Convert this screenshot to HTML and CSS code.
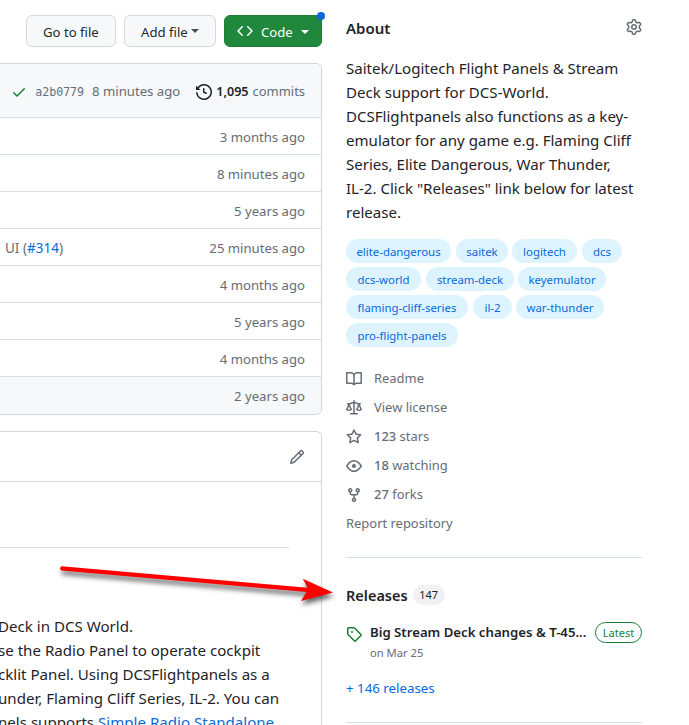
FILE: index.html
```html
<!DOCTYPE html>
<html lang="en">
<head>
<meta charset="utf-8">
<title>Repository</title>
<link rel="stylesheet" href="styles.css">
</head>
<body>
<div class="page">
  <main class="main">
    <div class="toolbar">
      <button class="btn btn-goto">Go to file</button>
      <button class="btn btn-add">Add file<span class="caret"></span></button>
      <button class="btn btn-primary">
        <svg class="icon" viewBox="0 0 16 16"><path d="m11.28 3.22 4.25 4.25a.75.75 0 0 1 0 1.06l-4.25 4.25a.749.749 0 0 1-1.275-.326.749.749 0 0 1 .215-.734L13.94 8l-3.72-3.72a.749.749 0 0 1 .326-1.275.749.749 0 0 1 .734.215Zm-6.56 0a.751.751 0 0 1 1.042.018.751.751 0 0 1 .018 1.042L2.06 8l3.72 3.72a.749.749 0 0 1-.326 1.275.749.749 0 0 1-.734-.215L.47 8.53a.75.75 0 0 1 0-1.06Z"/></svg>
        <span class="code-label">Code</span><span class="caret"></span>
        <span class="dot"></span>
      </button>
    </div>

    <section class="files">
      <div class="files-head">
        <svg class="icon check" viewBox="0 0 16 16"><path d="M13.78 4.22a.75.75 0 0 1 0 1.06l-7.25 7.25a.75.75 0 0 1-1.06 0L2.22 9.28a.751.751 0 0 1 .018-1.042.751.751 0 0 1 1.042-.018L6 10.94l6.72-6.72a.75.75 0 0 1 1.06 0Z"/></svg>
        <code class="sha">a2b0779</code>
        <span class="head-age">8 minutes ago</span>
        <svg class="icon history" viewBox="0 0 16 16"><path d="m.427 1.927 1.215 1.215a8.002 8.002 0 1 1-1.6 5.685.75.75 0 1 1 1.493-.154 6.5 6.5 0 1 0 1.18-4.458l1.358 1.358A.25.25 0 0 1 3.896 6H.25A.25.25 0 0 1 0 5.75V2.104a.25.25 0 0 1 .427-.177ZM7.75 4a.75.75 0 0 1 .75.75v2.992l2.028.812a.75.75 0 0 1-.557 1.392l-2.5-1A.751.751 0 0 1 7 8.25v-3.5A.75.75 0 0 1 7.75 4Z"/></svg>
        <strong class="count">1,095</strong>
        <span class="commits">commits</span>
      </div>
      <div class="row"><span class="age">3 months ago</span></div>
      <div class="row"><span class="age">8 minutes ago</span></div>
      <div class="row"><span class="age">5 years ago</span></div>
      <div class="row"><span class="message">UI (<a href="#">#314</a>)</span><span class="age">25 minutes ago</span></div>
      <div class="row"><span class="age">4 months ago</span></div>
      <div class="row"><span class="age">5 years ago</span></div>
      <div class="row"><span class="age">4 months ago</span></div>
      <div class="row row-last"><span class="age">2 years ago</span></div>
    </section>

    <section class="readme">
      <div class="readme-head">
        <svg class="icon" viewBox="0 0 16 16"><path d="M11.013 1.427a1.75 1.75 0 0 1 2.474 0l1.086 1.086a1.75 1.75 0 0 1 0 2.474l-8.61 8.61c-.21.21-.47.364-.756.445l-3.251.93a.75.75 0 0 1-.927-.928l.929-3.25c.081-.286.235-.547.445-.758l8.61-8.61Zm.176 4.823L9.75 4.81l-6.286 6.287a.253.253 0 0 0-.064.108l-.558 1.953 1.953-.558a.253.253 0 0 0 .108-.064Zm1.238-3.763a.25.25 0 0 0-.354 0L10.811 3.75l1.439 1.44 1.263-1.263a.25.25 0 0 0 0-.354Z"/></svg>
      </div>
      <div class="readme-rule"></div>
      <p class="readme-text">Deck in DCS World.<br>se the Radio Panel to operate cockpit<br>cklit Panel. Using DCSFlightpanels as a<br>under, Flaming Cliff Series, IL-2. You can<br>nels supports <a href="#">Simple Radio Standalone</a></p>
    </section>
  </main>

  <aside class="side">
    <div class="side-head">
      <h2>About</h2>
      <svg class="icon" viewBox="0 0 16 16"><path d="M8 0a8.2 8.2 0 0 1 .701.031C9.444.095 9.99.645 10.16 1.29l.288 1.107c.018.066.079.158.212.224.231.114.454.243.668.386.123.082.233.09.299.071l1.103-.303c.644-.176 1.392.021 1.82.63.27.385.506.792.704 1.218.315.675.111 1.422-.364 1.891l-.814.806c-.049.048-.098.147-.088.294.016.257.016.515 0 .772-.01.147.038.246.088.294l.814.806c.475.469.679 1.216.364 1.891a7.977 7.977 0 0 1-.704 1.217c-.428.61-1.176.807-1.82.63l-1.102-.302c-.067-.019-.177-.011-.3.071a5.909 5.909 0 0 1-.668.386c-.133.066-.194.158-.211.224l-.29 1.106c-.168.646-.715 1.196-1.458 1.26a8.006 8.006 0 0 1-1.402 0c-.743-.064-1.289-.614-1.458-1.26l-.289-1.106c-.018-.066-.079-.158-.212-.224a5.738 5.738 0 0 1-.668-.386c-.123-.082-.233-.09-.299-.071l-1.103.303c-.644.176-1.392-.021-1.82-.63a8.12 8.12 0 0 1-.704-1.218c-.315-.675-.111-1.422.363-1.891l.815-.806c.05-.048.098-.147.088-.294a6.214 6.214 0 0 1 0-.772c.01-.147-.038-.246-.088-.294l-.815-.806C.635 6.045.431 5.298.746 4.623a7.92 7.92 0 0 1 .704-1.217c.428-.61 1.176-.807 1.82-.63l1.102.302c.067.019.177.011.3-.071.214-.143.437-.272.668-.386.133-.066.194-.158.211-.224l.29-1.106C6.009.645 6.556.095 7.299.03 7.53.01 7.764 0 8 0Zm-.571 1.525c-.036.003-.108.036-.137.146l-.289 1.105c-.147.561-.549.967-.998 1.189-.173.086-.34.183-.5.29-.417.278-.97.423-1.529.27l-1.103-.303c-.109-.03-.175.016-.195.045-.22.312-.412.644-.573.99-.014.031-.021.11.059.19l.815.806c.411.406.562.957.53 1.456a4.709 4.709 0 0 0 0 .582c.032.499-.119 1.05-.53 1.456l-.815.806c-.081.08-.073.159-.059.19.162.346.353.677.573.989.02.03.085.076.195.046l1.102-.303c.56-.153 1.113-.008 1.53.27.161.107.328.204.501.29.447.222.85.629.997 1.189l.289 1.105c.029.109.101.143.137.146a6.6 6.6 0 0 0 1.142 0c.036-.003.108-.036.137-.146l.289-1.105c.147-.561.549-.967.998-1.189.173-.086.34-.183.5-.29.417-.278.97-.423 1.529-.27l1.103.303c.109.029.175-.016.195-.045.22-.313.411-.644.573-.99.014-.031.021-.11-.059-.19l-.815-.806c-.411-.406-.562-.957-.53-1.456a4.709 4.709 0 0 0 0-.582c-.032-.499.119-1.05.53-1.456l.815-.806c.081-.08.073-.159.059-.19a6.464 6.464 0 0 0-.573-.989c-.02-.03-.085-.076-.195-.046l-1.102.303c-.56.153-1.113.008-1.53-.27a4.44 4.44 0 0 0-.501-.29c-.447-.222-.85-.629-.997-1.189l-.289-1.105c-.029-.11-.101-.143-.137-.146a6.6 6.6 0 0 0-1.142 0ZM11 8a3 3 0 1 1-6 0 3 3 0 0 1 6 0ZM9.5 8a1.5 1.5 0 1 0-3.001.001A1.5 1.5 0 0 0 9.5 8Z"/></svg>
    </div>
    <p class="about">Saitek/Logitech Flight Panels &amp; Stream<br>Deck support for DCS-World.<br>DCSFlightpanels also functions as a key-<br>emulator for any game e.g. Flaming Cliff<br>Series, Elite Dangerous, War Thunder,<br>IL-2. Click "Releases" link below for latest<br>release.</p>
    <div class="topics">
      <div class="topic-row"><a class="w105">elite-dangerous</a><a class="w52">saitek</a><a class="w65 near">logitech</a><a class="w40">dcs</a></div>
      <div class="topic-row"><a class="w75">dcs-world</a><a class="w88">stream-deck</a><a class="w88 near">keyemulator</a></div>
      <div class="topic-row"><a class="w122">flaming-cliff-series</a><a class="w39">il-2</a><a class="w88 near">war-thunder</a></div>
      <div class="topic-row"><a class="w112">pro-flight-panels</a></div>
    </div>
    <ul class="meta">
      <li><svg class="icon" viewBox="0 0 16 16"><path d="M0 1.75A.75.75 0 0 1 .75 1h4.253c1.227 0 2.317.59 3 1.501A3.743 3.743 0 0 1 11.006 1h4.245a.75.75 0 0 1 .75.75v10.5a.75.75 0 0 1-.75.75h-4.507a2.25 2.25 0 0 0-1.591.659l-.622.621a.75.75 0 0 1-1.06 0l-.622-.621A2.25 2.25 0 0 0 5.258 13H.75a.75.75 0 0 1-.75-.75Zm7.251 10.324.004-5.073-.002-2.253A2.25 2.25 0 0 0 5.003 2.5H1.5v9h3.757a3.75 3.75 0 0 1 1.994.574ZM8.755 4.75l-.004 7.322a3.752 3.752 0 0 1 1.992-.572H14.5v-9h-3.495a2.25 2.25 0 0 0-2.25 2.25Z"/></svg>Readme</li>
      <li><svg class="icon" viewBox="0 0 16 16"><path d="M8.75.75V2h.985c.304 0 .603.08.867.231l1.29.736c.038.022.08.033.124.033h2.234a.75.75 0 0 1 0 1.5h-.427l2.111 4.692a.75.75 0 0 1-.154.838l-.53-.53.529.531-.001.002-.002.002-.006.006-.006.005-.01.01-.045.04c-.21.176-.441.327-.686.45C14.556 10.78 13.88 11 13 11a4.498 4.498 0 0 1-2.023-.454 3.544 3.544 0 0 1-.686-.45l-.045-.04-.016-.015-.006-.006-.004-.004v-.001a.75.75 0 0 1-.154-.838L12.178 4.5h-.162c-.305 0-.604-.079-.868-.231l-1.29-.736a.245.245 0 0 0-.124-.033H8.75V13h2.5a.75.75 0 0 1 0 1.5h-6.5a.75.75 0 0 1 0-1.5h2.5V3.5h-.984a.245.245 0 0 0-.124.033l-1.289.737c-.265.15-.564.23-.869.23h-.162l2.112 4.692a.75.75 0 0 1-.154.838l-.53-.53.529.531-.001.002-.002.002-.006.006-.016.015-.045.04c-.21.176-.441.327-.686.45C4.556 10.78 3.88 11 3 11a4.498 4.498 0 0 1-2.023-.454 3.544 3.544 0 0 1-.686-.45l-.045-.04-.016-.015-.006-.006-.004-.004v-.001a.75.75 0 0 1-.154-.838L2.178 4.5H1.75a.75.75 0 0 1 0-1.5h2.234a.249.249 0 0 0 .125-.033l1.288-.737c.265-.15.564-.23.869-.23h.984V.75a.75.75 0 0 1 1.5 0Zm2.945 8.477c.285.135.718.273 1.305.273s1.02-.138 1.305-.273L13 6.327Zm-10 0c.285.135.718.273 1.305.273s1.02-.138 1.305-.273L3 6.327Z"/></svg>View license</li>
      <li><svg class="icon" viewBox="0 0 16 16"><path d="M8 .25a.75.75 0 0 1 .673.418l1.882 3.815 4.21.612a.75.75 0 0 1 .416 1.279l-3.046 2.97.719 4.192a.751.751 0 0 1-1.088.791L8 12.347l-3.766 1.98a.75.75 0 0 1-1.088-.79l.72-4.194L.818 6.374a.75.75 0 0 1 .416-1.28l4.21-.611L7.327.668A.75.75 0 0 1 8 .25Zm0 2.445L6.615 5.5a.75.75 0 0 1-.564.41l-3.097.45 2.24 2.184a.75.75 0 0 1 .216.664l-.528 3.084 2.769-1.456a.75.75 0 0 1 .698 0l2.77 1.456-.53-3.084a.75.75 0 0 1 .216-.664l2.24-2.183-3.096-.45a.75.75 0 0 1-.564-.41L8 2.694Z"/></svg><b>123</b> stars</li>
      <li><svg class="icon" viewBox="0 0 16 16"><path d="M8 2c1.981 0 3.671.992 4.933 2.078 1.27 1.091 2.187 2.345 2.637 3.023a1.62 1.62 0 0 1 0 1.798c-.45.678-1.367 1.932-2.637 3.023C11.67 13.008 9.981 14 8 14c-1.981 0-3.671-.992-4.933-2.078C1.797 10.83.88 9.576.43 8.898a1.62 1.62 0 0 1 0-1.798c.45-.677 1.367-1.931 2.637-3.022C4.33 2.992 6.019 2 8 2ZM1.679 7.932a.12.12 0 0 0 0 .136c.411.622 1.241 1.75 2.366 2.717C5.176 11.758 6.527 12.5 8 12.5c1.473 0 2.825-.742 3.955-1.715 1.124-.967 1.954-2.096 2.366-2.717a.12.12 0 0 0 0-.136c-.412-.621-1.242-1.75-2.366-2.717C10.824 4.242 9.473 3.5 8 3.5c-1.473 0-2.825.742-3.955 1.715-1.124.967-1.954 2.096-2.366 2.717ZM8 10a2 2 0 1 1-.001-3.999A2 2 0 0 1 8 10Z"/></svg><b>18</b> watching</li>
      <li><svg class="icon" viewBox="0 0 16 16"><path d="M5 5.372v.878c0 .414.336.75.75.75h4.5a.75.75 0 0 0 .75-.75v-.878a2.25 2.25 0 1 1 1.5 0v.878a2.25 2.25 0 0 1-2.25 2.25h-1.5v2.128a2.251 2.251 0 1 1-1.5 0V8.5h-1.5A2.25 2.25 0 0 1 3.5 6.25v-.878a2.25 2.25 0 1 1 1.5 0ZM5 3.25a.75.75 0 1 0-1.5 0 .75.75 0 0 0 1.5 0Zm6.75.75a.75.75 0 1 0 0-1.5.75.75 0 0 0 0 1.5Zm-3 8.75a.75.75 0 1 0-1.5 0 .75.75 0 0 0 1.5 0Z"/></svg><b>27</b> forks</li>
      <li>Report repository</li>
    </ul>

    <section class="releases">
      <div class="releases-head"><h2>Releases</h2><span class="counter">147</span></div>
      <div class="release">
        <svg class="icon tag" viewBox="0 0 16 16"><path d="M1 7.775V2.75C1 1.784 1.784 1 2.75 1h5.025c.464 0 .91.184 1.238.513l6.25 6.25a1.75 1.75 0 0 1 0 2.474l-5.026 5.026a1.75 1.75 0 0 1-2.474 0l-6.25-6.25A1.752 1.752 0 0 1 1 7.775Zm1.5 0c0 .066.026.13.073.177l6.25 6.25a.25.25 0 0 0 .354 0l5.025-5.025a.25.25 0 0 0 0-.354l-6.25-6.25a.25.25 0 0 0-.177-.073H2.75a.25.25 0 0 0-.25.25ZM6 5a1 1 0 1 1 0 2 1 1 0 0 1 0-2Z"/></svg>
        <div class="release-body">
          <div class="release-title"><strong>Big Stream Deck changes &amp; T-45...</strong><span class="latest">Latest</span></div>
          <div class="release-date">on Mar 25</div>
        </div>
      </div>
      <a class="more" href="#">+ 146 releases</a>
    </section>
    <div class="end-rule"></div>
  </aside>

  <svg class="arrow" viewBox="0 0 290 60">
    <path d="M11.500 14.300Q9 15.800 11 18.400L256.500 40 251 49 283 40.400 252.800 26.800 257.500 35.800Z"/>
  </svg>
</div>
</body>
</html>
```
FILE: styles.css
```css
* { box-sizing: border-box; }

body {
  margin: 0;
  background: #fff;
  color: #1f2328;
  font-family: "Noto Sans", "Open Sans", sans-serif;
  font-size: 13.15px;
  line-height: 21px;
}

a { color: #0969da; text-decoration: none; }
h2, p, ul { margin: 0; padding: 0; }
h2 { font-size: 15px; font-weight: 600; line-height: 24px; }

.page {
  position: relative;
  display: flex;
  gap: 24px;
  width: 689px;
  height: 725px;
  overflow: hidden;
}

.icon {
  display: block;
  flex: none;
  width: 16px;
  height: 16px;
  fill: currentColor;
}

.main {
  display: flex;
  flex-direction: column;
  width: 322px;
  flex: none;
  white-space: nowrap;
}

/* Toolbar */
.toolbar {
  display: flex;
  justify-content: flex-end;
  gap: 8px;
  padding-top: 15px;
}

.btn {
  position: relative;
  display: flex;
  align-items: center;
  height: 32px;
  padding: 2px 16px 0;
  border: 1px solid #d5d8da;
  border-radius: 6px;
  background: #f6f8fa;
  color: #24292f;
  font: inherit;
}
.btn-goto { width: 90px; }
.btn-add { width: 92px; }
.btn-primary {
  width: 98px;
  padding: 0 12px;
  border-color: #1f7f37;
  background: #1f883d;
  color: #fff;
}
.code-label { margin-left: 8px; padding-top: 2px; }
.caret {
  margin-left: 3px;
  margin-top: -3px;
  border: 4px solid transparent;
  border-top-color: #484d53;
  border-bottom: 0;
}
.btn-primary .caret { margin: 1px 0 0 8px; border-top-color: #fff; }
.btn-primary .icon { margin-top: -1px; }
.dot {
  position: absolute;
  top: -4px;
  right: -4px;
  width: 8px;
  height: 8px;
  border-radius: 50%;
  background: #0969da;
}

/* File list */
.files {
  flex: none;
  margin-top: 16px;
  border: 1px solid #d0d7de;
  border-left: 0;
  border-radius: 0 6px 6px 0;
  overflow: hidden;
  color: #656d76;
}
.files-head {
  display: flex;
  align-items: center;
  justify-content: flex-end;
  height: 53px;
  padding: 2px 16px 0 0;
  background: #f6f8fa;
}
.check { margin-right: 8px; color: #1a7f37; }
.sha {
  margin-right: 8px;
  font: 11.6px "DejaVu Sans Mono", monospace;
}
.head-age { margin-right: 16px; }
.history { color: #1f2328; }
.count {
  margin-left: 4px;
  margin-right: 4px;
  color: #1f2328;
  font-weight: 600;
  font-size: 12.6px;
}
.commits { font-size: 12.95px; }
.row {
  display: flex;
  align-items: center;
  height: 37px;
  padding: 2px 16px 0 5px;
  border-top: 1px solid #d8dee4;
}
.row-last { height: 38px; background: #f6f8fa; }
.message { font-size: 13.5px; }
.age { margin-left: auto; }

/* Readme */
.readme {
  flex: none;
  height: 294px;
  margin-top: 16px;
  border: 1px solid #d0d7de;
  border-left: 0;
  border-bottom: 0;
  border-radius: 0 6px 0 0;
}
.readme-head {
  display: flex;
  align-items: center;
  justify-content: flex-end;
  height: 50px;
  padding-right: 16px;
  border-bottom: 1px solid #d0d7de;
  color: #656d76;
}
.readme-rule {
  height: 66px;
  margin-right: 32px;
  border-bottom: 1px solid #d8dee4;
}
.readme-text {
  margin: 66px 0 0 -2px;
  font-size: 15.1px;
  line-height: 24px;
}

/* Sidebar */
.side { width: 296px; flex: none; padding-top: 16px; }
.side-head {
  display: flex;
  justify-content: space-between;
  align-items: center;
  height: 24px;
}
.side-head .icon { color: #656d76; margin-top: -2px; }
.about {
  margin-top: 16px;
  font-size: 15.07px;
  line-height: 24px;
  white-space: nowrap;
}
.topics { margin-top: 15px; font-size: 11.4px; }
.topic-row { display: flex; gap: 5px; height: 28px; }
.topic-row a {
  flex: none;
  height: 24px;
  border-radius: 12px;
  background: #ddf4ff;
  line-height: 25px;
  text-align: center;
}
.topic-row .near { margin-left: -1px; }
.w105 { width: 105px; }
.w52 { width: 52px; }
.w65 { width: 65px; }
.w40 { width: 40px; }
.w75 { width: 75px; }
.w88 { width: 88px; }
.w122 { width: 122px; }
.w39 { width: 39px; }
.w112 { width: 112px; }

.meta { margin-top: 17px; list-style: none; color: #656d76; }
.meta li {
  display: flex;
  align-items: center;
  height: 21px;
  margin-bottom: 8px;
  font-size: 12.95px;
  white-space: pre;
}
.meta .icon { margin-right: 12px; }
.meta b { font-weight: 500; }

.releases {
  margin-top: 23px;
  padding-top: 25px;
  border-top: 1px solid #d8dee4;
}
.releases-head { display: flex; align-items: center; height: 24px; }
.releases-head h2 { font-size: 14.5px; }
.counter {
  width: 32px;
  height: 20px;
  margin-left: 5px;
  border-radius: 10px;
  background: #eff1f3;
  font-size: 11px;
  line-height: 20px;
  text-align: center;
}
.release { display: flex; margin-top: 15px; }
.tag { margin-top: 4px; color: #1a7f37; }
.release-body { flex: 1; margin-left: 8px; }
.release-title {
  display: flex;
  align-items: center;
  justify-content: space-between;
  height: 21px;
  white-space: nowrap;
}
.release-title strong { font-weight: 600; font-size: 13.2px; }
.latest {
  width: 47px;
  height: 21px;
  border: 1px solid #1a7f37;
  border-radius: 11px;
  color: #1a7f37;
  font-size: 11px;
  line-height: 19px;
  text-align: center;
}
.release-date {
  padding-top: 1px;
  color: #656d76;
  font-size: 11.2px;
  line-height: 18px;
}
.more { display: block; margin-top: 16px; font-size: 13.3px; }
.end-rule { margin-top: 23px; border-top: 1px solid #d8dee4; }

/* Callout arrow pointing at the releases */
.arrow {
  position: absolute;
  left: 50px;
  top: 552px;
  width: 290px;
  height: 60px;
  overflow: visible;
  fill: #f00;
  filter: drop-shadow(1px 4px 2.5px rgba(0, 0, 0, 0.6));
}
```
